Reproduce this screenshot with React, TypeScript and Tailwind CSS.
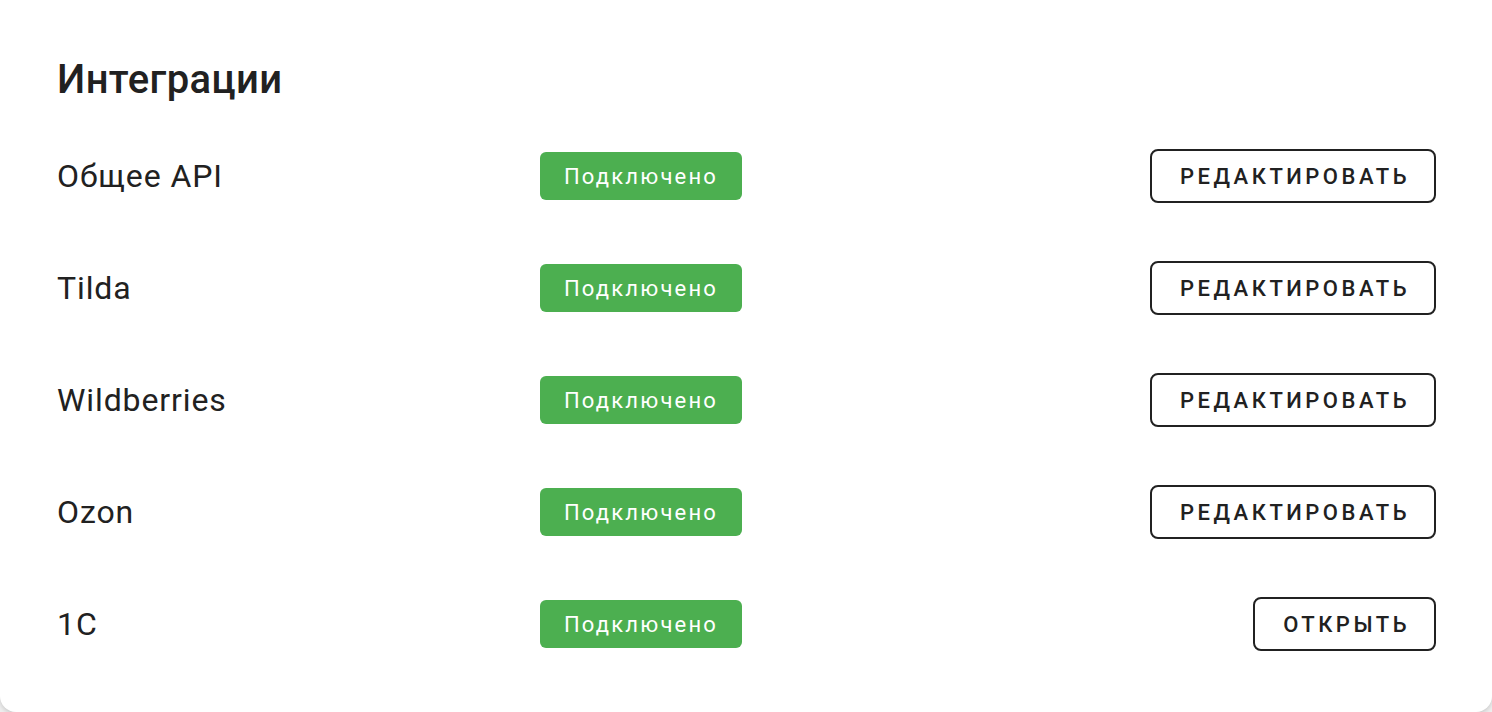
const INTEGRATIONS = [
  { name: "Общее API", action: "Редактировать" },
  { name: "Tilda", action: "Редактировать" },
  { name: "Wildberries", action: "Редактировать" },
  { name: "Ozon", action: "Редактировать" },
  { name: "1C", action: "Открыть" },
];

export default function App() {
  return (
    <div className="min-h-screen bg-[#eeeeee] font-['Roboto',sans-serif] text-[#212121]">
      <div className="h-[712px] bg-white rounded-b-2xl shadow-[0_2px_4px_rgba(0,0,0,0.15)] pl-[57px] pr-[56px] pt-[56px]">
        <h2 className="text-[40px] leading-[48px] font-medium tracking-[0.4px]">Интеграции</h2>

        <div className="mt-4 flex flex-col">
          {INTEGRATIONS.map((item) => (
            <div key={item.name} className="h-[112px] flex items-center">
              <div className="w-[483px] text-[32px] tracking-[0.9px]">{item.name}</div>
              <span className="w-[202px] h-[48px] rounded-md bg-[#4caf50] text-white text-[22px] tracking-[2.2px] flex items-center justify-center">
                Подключено
              </span>
              <button className="ml-auto h-[54px] pl-[28px] pr-[24px] border-2 border-[#212121] rounded-lg text-[22px] font-medium uppercase tracking-[3.5px]">
                {item.action}
              </button>
            </div>
          ))}
        </div>
      </div>
    </div>
  );
}
